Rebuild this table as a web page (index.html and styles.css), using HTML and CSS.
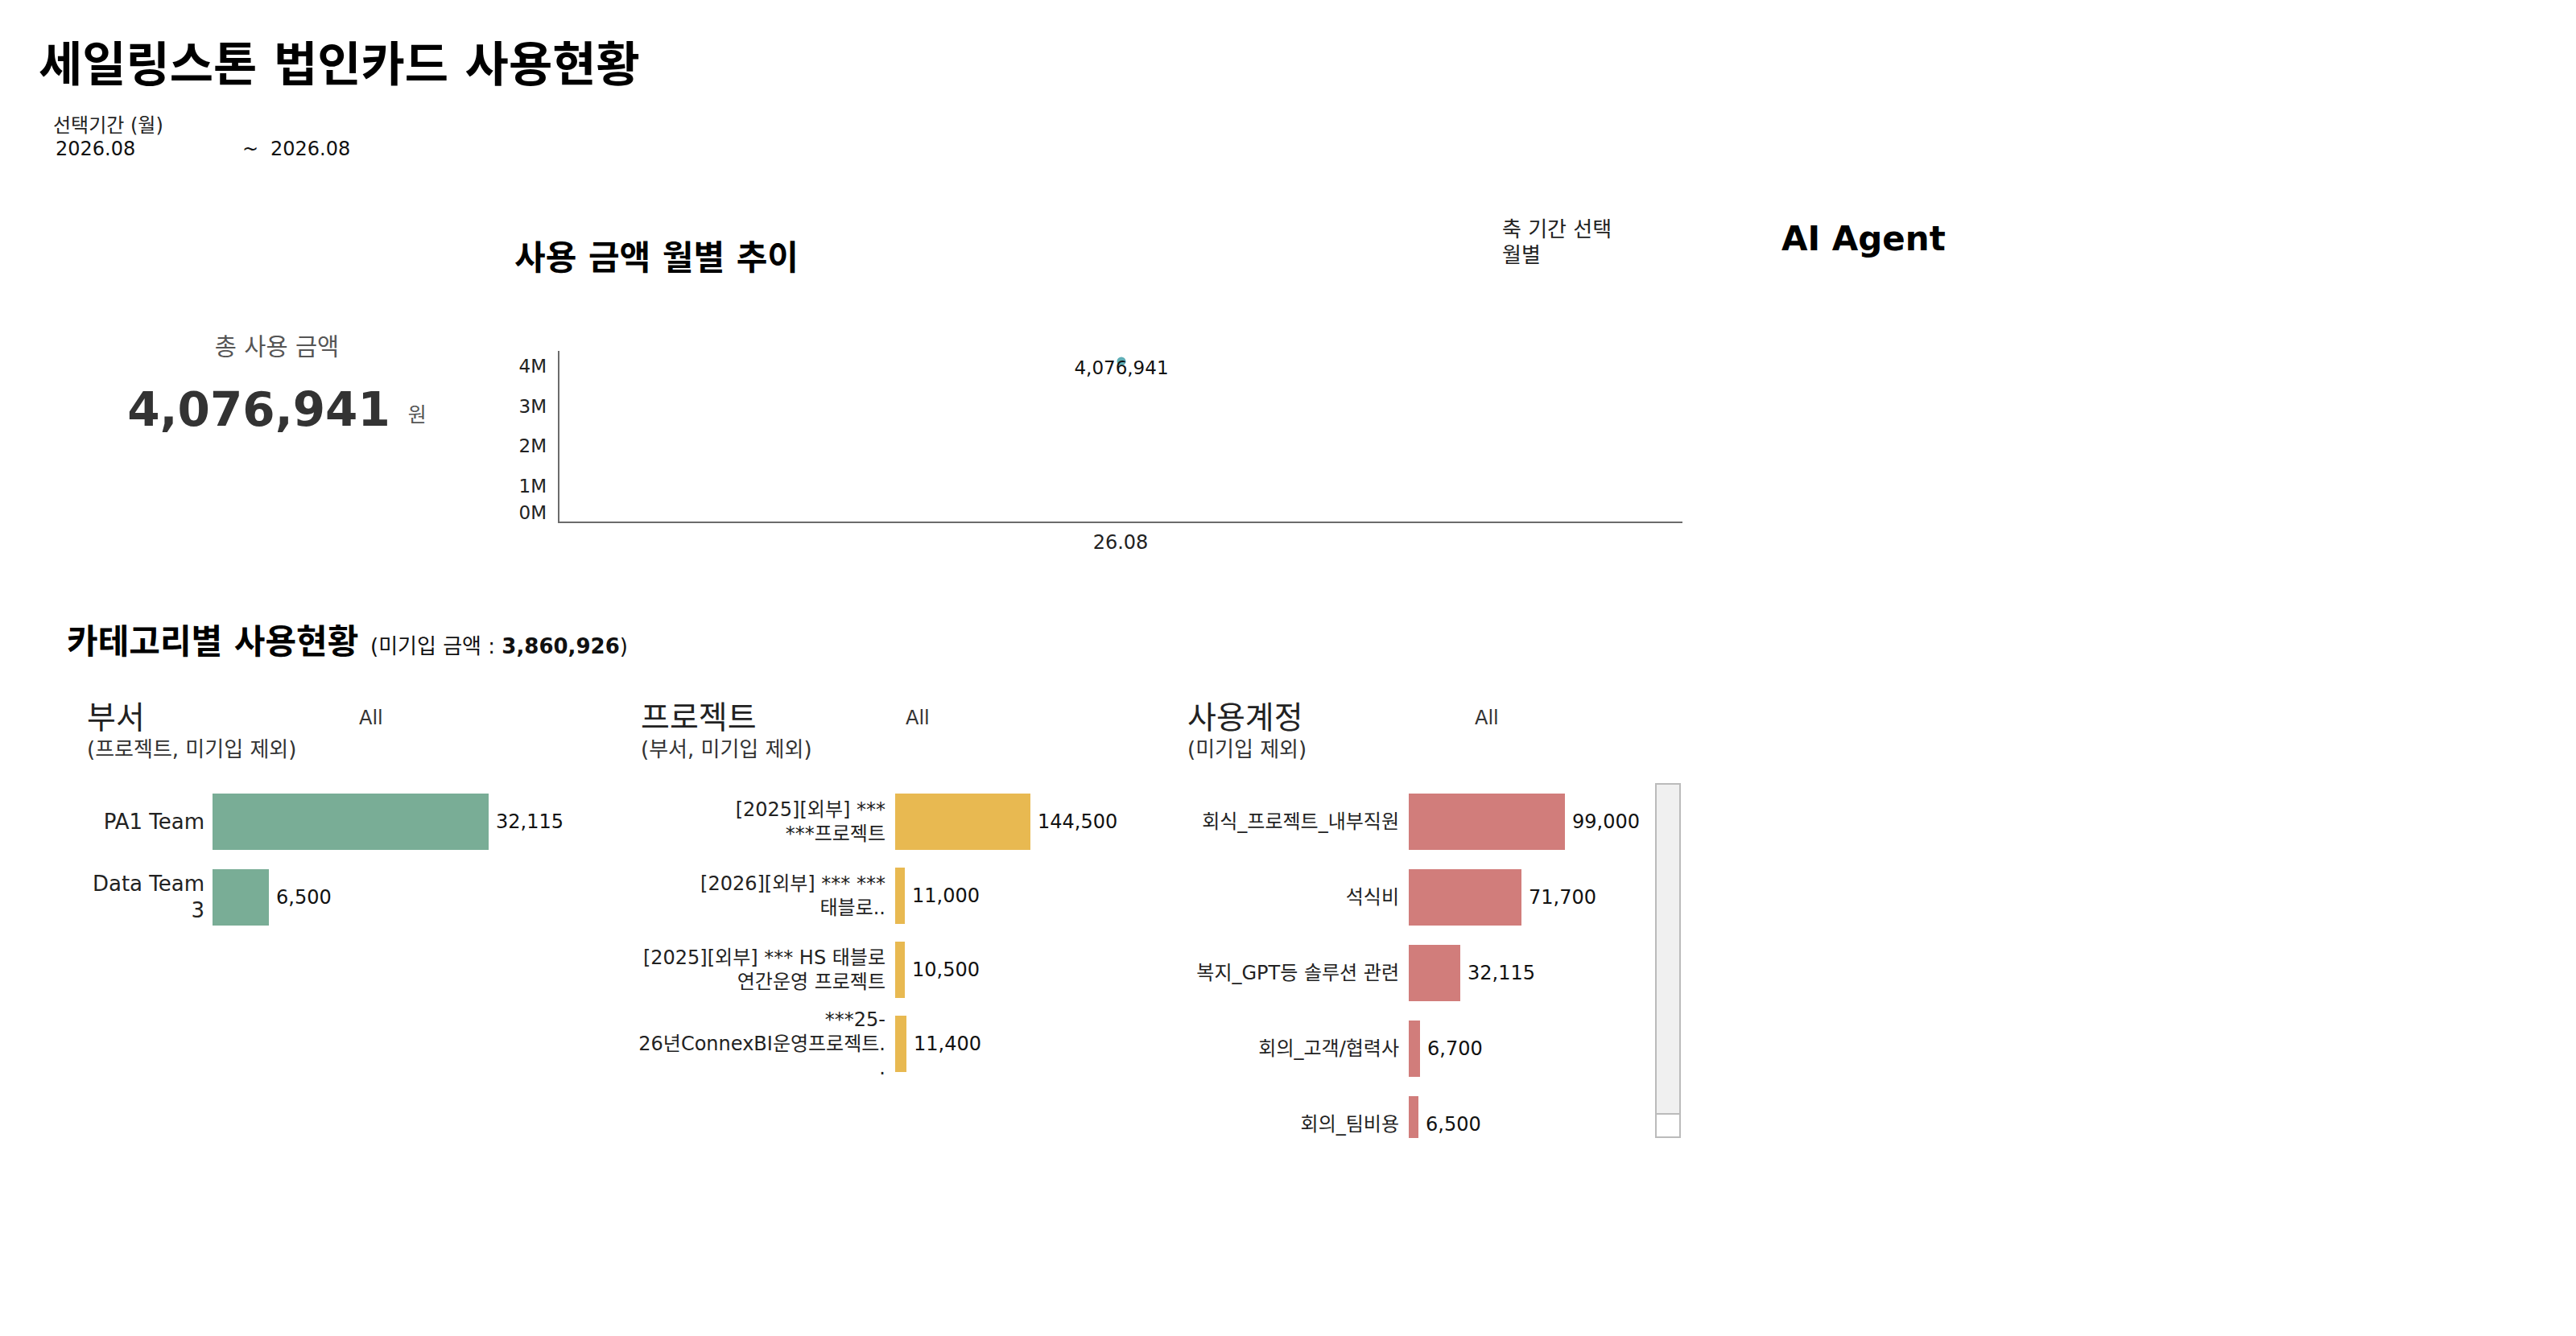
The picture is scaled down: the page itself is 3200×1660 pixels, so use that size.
FILE: index.html
```html
<!DOCTYPE html>
<html lang="ko">
<head>
<meta charset="utf-8">
<title>세일링스톤 법인카드 사용현황</title>
<link rel="stylesheet" href="styles.css">
</head>
<body>
<div class="dash">
  <header class="top">
    <h1 class="title">세일링스톤 법인카드 사용현황</h1>
    <div class="period">
      <div class="period-label">선택기간 (월)</div>
      <div class="period-values"><span class="period-from">2026.08</span><span class="tilde">~</span><span class="period-to">2026.08</span></div>
    </div>
  </header>

  <section class="overview">
    <div class="kpi">
      <div class="kpi-label">총 사용 금액</div>
      <div class="kpi-value"><span class="kpi-num">4,076,941</span><span class="kpi-unit">원</span></div>
    </div>
    <div class="trend">
      <div class="trend-head">
        <h2 class="trend-title">사용 금액 월별 추이</h2>
        <div class="axis-select">
          <div>축 기간 선택</div>
          <div>월별</div>
        </div>
      </div>
      <svg class="chart" width="1470" height="260" viewBox="0 0 1470 260">
        <line class="axis" x1="64" y1="6" x2="64" y2="220"></line>
        <line class="axis" x1="63" y1="219" x2="1460" y2="219"></line>
        <text class="tick" x="49" y="33" text-anchor="end">4M</text>
        <text class="tick" x="49" y="83" text-anchor="end">3M</text>
        <text class="tick" x="49" y="132" text-anchor="end">2M</text>
        <text class="tick" x="49" y="182" text-anchor="end">1M</text>
        <text class="tick" x="49" y="215" text-anchor="end">0M</text>
        <circle class="point" cx="763" cy="19" r="5.5"></circle>
        <text class="point-label" x="763" y="35" text-anchor="middle">4,076,941</text>
        <text class="xtick" x="762" y="252" text-anchor="middle">26.08</text>
      </svg>
    </div>
    <div class="agent">
      <h2 class="agent-title">AI Agent</h2>
    </div>
  </section>

  <section class="category">
    <h2 class="cat-title">카테고리별 사용현황 <span class="cat-note">(미기입 금액 : <b>3,860,926</b>)</span></h2>
    <div class="panels">
      <div class="panel panel-dept">
        <div class="panel-head">
          <div class="panel-titles">
            <div class="panel-title">부서</div>
            <div class="panel-sub">(프로젝트, 미기입 제외)</div>
          </div>
          <div class="panel-filter">All</div>
        </div>
        <div class="list">
          <div class="rows">
            <div class="row">
              <div class="label"><span>PA1 Team</span></div>
              <div class="bar bar-green" style="width:343px"></div>
              <div class="value">32,115</div>
            </div>
            <div class="row">
              <div class="label"><span>Data Team</span><span>3</span></div>
              <div class="bar bar-green" style="width:70px"></div>
              <div class="value">6,500</div>
            </div>
          </div>
        </div>
      </div>

      <div class="panel panel-proj">
        <div class="panel-head">
          <div class="panel-titles">
            <div class="panel-title">프로젝트</div>
            <div class="panel-sub">(부서, 미기입 제외)</div>
          </div>
          <div class="panel-filter">All</div>
        </div>
        <div class="list">
          <div class="rows">
            <div class="row">
              <div class="label"><span>[2025][외부] ***</span><span>***프로젝트</span></div>
              <div class="bar bar-yellow" style="width:168px"></div>
              <div class="value">144,500</div>
            </div>
            <div class="row">
              <div class="label"><span>[2026][외부] *** ***</span><span>태블로..</span></div>
              <div class="bar bar-yellow" style="width:12px"></div>
              <div class="value">11,000</div>
            </div>
            <div class="row">
              <div class="label"><span>[2025][외부] *** HS 태블로</span><span>연간운영 프로젝트</span></div>
              <div class="bar bar-yellow" style="width:12px"></div>
              <div class="value">10,500</div>
            </div>
            <div class="row">
              <div class="label"><span>***25-</span><span>26년ConnexBI운영프로젝트.</span><span>.</span></div>
              <div class="bar bar-yellow" style="width:14px"></div>
              <div class="value">11,400</div>
            </div>
          </div>
        </div>
      </div>

      <div class="panel panel-acct">
        <div class="panel-head">
          <div class="panel-titles">
            <div class="panel-title">사용계정</div>
            <div class="panel-sub">(미기입 제외)</div>
          </div>
          <div class="panel-filter">All</div>
        </div>
        <div class="list list-scroll">
          <div class="rows">
            <div class="row">
              <div class="label"><span>회식_프로젝트_내부직원</span></div>
              <div class="bar bar-red" style="width:194px"></div>
              <div class="value">99,000</div>
            </div>
            <div class="row">
              <div class="label"><span>석식비</span></div>
              <div class="bar bar-red" style="width:140px"></div>
              <div class="value">71,700</div>
            </div>
            <div class="row">
              <div class="label"><span>복지_GPT등 솔루션 관련</span></div>
              <div class="bar bar-red" style="width:64px"></div>
              <div class="value">32,115</div>
            </div>
            <div class="row">
              <div class="label"><span>회의_고객/협력사</span></div>
              <div class="bar bar-red" style="width:14px"></div>
              <div class="value">6,700</div>
            </div>
            <div class="row">
              <div class="label"><span>회의_팀비용</span></div>
              <div class="bar bar-red" style="width:12px"></div>
              <div class="value">6,500</div>
            </div>
          </div>
          <div class="scrollbar"><div class="scroll-thumb"></div></div>
        </div>
      </div>
    </div>
  </section>
</div>
</body>
</html>
```

FILE: styles.css
```css
* { box-sizing: border-box; }

html, body {
  margin: 0;
  padding: 0;
  background: #ffffff;
}

body {
  font-family: "DejaVu Sans", "Noto Sans CJK KR", sans-serif;
  color: #222222;
}

.dash {
  width: 3200px;
  height: 1660px;
  overflow: hidden;
}

/* ---------- header ---------- */
.top {
  display: flex;
  flex-direction: column;
  align-items: flex-start;
}

.title {
  margin: 47px 0 0 48px;
  font-size: 59px;
  line-height: 68px;
  font-weight: bold;
  color: #000000;
}

.period {
  margin: 28px 0 0 66px;
}

.period-label {
  font-size: 24px;
  line-height: 26px;
  color: #222222;
}

.period-values {
  margin: 2px 0 0 3px;
  font-size: 24px;
  line-height: 28px;
  color: #111111;
  display: flex;
}

.period-from {
  width: 232px;
}

.tilde {
  width: 20px;
}

.period-to {
  margin-left: 15px;
}

/* ---------- overview ---------- */
.overview {
  display: flex;
  align-items: flex-start;
  margin-top: 61px;
  height: 430px;
}

.kpi {
  margin: 154px 0 0 58px;
  width: 572px;
  text-align: center;
}

.kpi-label {
  font-size: 29.5px;
  line-height: 34px;
  color: #555555;
}

.kpi-value {
  margin-top: 27px;
  height: 68px;
  line-height: 68px;
  white-space: nowrap;
}

.kpi-num {
  font-size: 58px;
  font-weight: bold;
  color: #333333;
}

.kpi-unit {
  font-size: 25px;
  line-height: 25px;
  color: #555555;
  margin-left: 22px;
  vertical-align: 5px;
}

.trend {
  width: 1470px;
  flex-shrink: 0;
}

.trend-head {
  display: grid;
  grid-template-columns: 1236px auto;
  height: 170px;
  align-items: start;
}

.trend-title {
  margin: 37px 0 0 9px;
  font-size: 42px;
  line-height: 48px;
  font-weight: bold;
  color: #000000;
}

.axis-select {
  margin-top: 9px;
  font-size: 26px;
  line-height: 32px;
  color: #222222;
}

.chart {
  display: block;
}

.axis {
  stroke: #6b6b6b;
  stroke-width: 2;
}

.tick {
  font-family: "DejaVu Sans", sans-serif;
  font-size: 23px;
  fill: #222222;
}

.xtick {
  font-family: "DejaVu Sans", sans-serif;
  font-size: 24px;
  fill: #222222;
}

.point {
  fill: #5faeb6;
}

.point-label {
  font-family: "DejaVu Sans", sans-serif;
  font-size: 23px;
  fill: #111111;
}

.agent {
  margin: 13px 0 0 113px;
}

.agent-title {
  margin: 0;
  font-size: 42px;
  line-height: 48px;
  font-weight: bold;
  color: #000000;
}

/* ---------- category ---------- */
.category {
  margin-top: 84px;
}

.cat-title {
  margin: 0 0 0 83px;
  height: 48px;
  font-size: 42px;
  line-height: 48px;
  font-weight: bold;
  color: #000000;
}

.cat-note {
  font-size: 26px;
  line-height: 26px;
  font-weight: normal;
  color: #111111;
}

.cat-note b {
  font-weight: bold;
}

.panels {
  display: flex;
  margin: 49px 0 0 108px;
}

.panel {
  flex-shrink: 0;
}

.panel-dept { width: 688px; }
.panel-proj { width: 679px; }
.panel-acct { width: 613px; }

.panel-head {
  display: flex;
  align-items: flex-start;
}

.panel-titles {
  flex-shrink: 0;
}

.panel-dept .panel-titles { width: 338px; }
.panel-proj .panel-titles { width: 329px; }
.panel-acct .panel-titles { width: 357px; }

.panel-title {
  font-size: 39px;
  line-height: 42px;
  color: #222222;
}

.panel-sub {
  margin-top: 4px;
  font-size: 26px;
  line-height: 28px;
  color: #333333;
}

.panel-filter {
  margin-top: 7px;
  font-size: 24px;
  line-height: 28px;
  color: #333333;
}

.list {
  margin-top: 28px;
  display: flex;
}

.rows {
  flex: 1;
  padding-top: 13px;
}

.list-scroll {
  height: 441px;
}

.list-scroll .rows {
  overflow: hidden;
}

.row {
  display: flex;
  align-items: center;
  height: 70px;
  margin-bottom: 24px;
}

.panel-proj .row {
  margin-bottom: 22px;
}

.label {
  flex-shrink: 0;
  display: flex;
  flex-direction: column;
  align-items: flex-end;
  margin-right: 12px;
  font-size: 24px;
  line-height: 33px;
  color: #222222;
  text-align: right;
}

.label span {
  white-space: nowrap;
}

.panel-dept .label { width: 146px; margin-right: 10px; font-size: 26px; line-height: 33px; }
.panel-proj .label { width: 304px; line-height: 30px; }
.panel-acct .label { width: 263px; }

.bar {
  height: 70px;
  flex-shrink: 0;
}

.bar-green { background: #79ad96; }
.bar-yellow { background: #e8b951; }
.bar-red { background: #d17d7b; }

.value {
  margin-left: 9px;
  font-size: 24px;
  line-height: 30px;
  color: #111111;
  white-space: nowrap;
}

.scrollbar {
  width: 32px;
  flex-shrink: 0;
  border: 2px solid #bbbbbb;
  background: #f0f0f0;
  display: flex;
  flex-direction: column;
  justify-content: flex-end;
}

.scroll-thumb {
  height: 29px;
  background: #ffffff;
  border-top: 2px solid #bbbbbb;
}
```
